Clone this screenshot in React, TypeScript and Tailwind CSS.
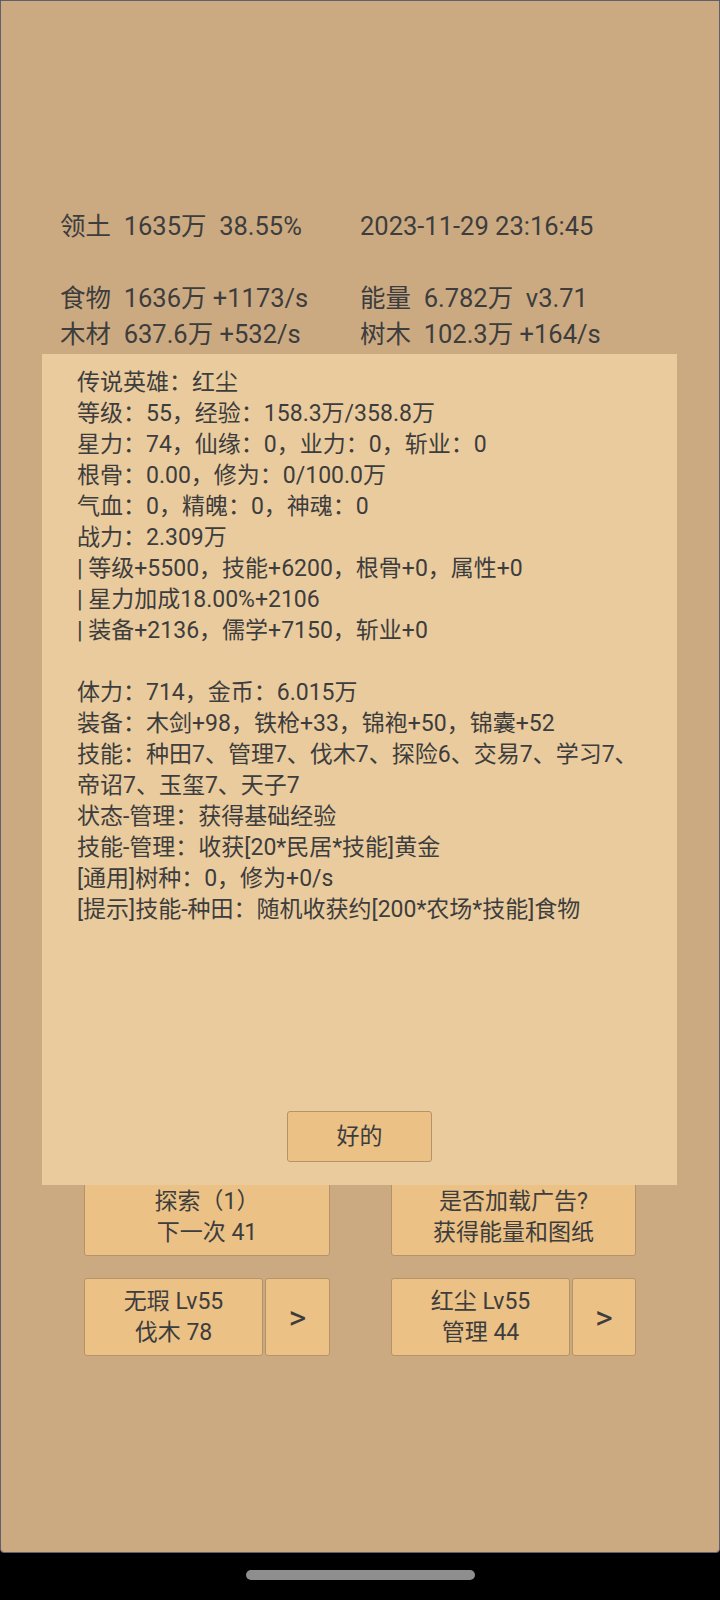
import React from "react"

const font = { fontFamily: "Roboto, 'Noto Sans CJK SC', sans-serif" }

const heroLines = [
  "传说英雄：红尘",
  "等级：55，经验：158.3万/358.8万",
  "星力：74，仙缘：0，业力：0，斩业：0",
  "根骨：0.00，修为：0/100.0万",
  "气血：0，精魄：0，神魂：0",
  "战力：2.309万",
  "| 等级+5500，技能+6200，根骨+0，属性+0",
  "| 星力加成18.00%+2106",
  "| 装备+2136，儒学+7150，斩业+0",
  "",
  "体力：714，金币：6.015万",
  "装备：木剑+98，铁枪+33，锦袍+50，锦囊+52",
  "技能：种田7、管理7、伐木7、探险6、交易7、学习7、",
  "帝诏7、玉玺7、天子7",
  "状态-管理：获得基础经验",
  "技能-管理：收获[20*民居*技能]黄金",
  "[通用]树种：0，修为+0/s",
  "[提示]技能-种田：随机收获约[200*农场*技能]食物",
]

function Btn({ children, className }: { children: React.ReactNode; className: string }) {
  return (
    <button
      className={
        "flex flex-col items-center justify-center rounded-[3px] border border-[#b4936b] bg-[#ebc186] leading-[31px] text-[#3d3d3d] " +
        className
      }
    >
      {children}
    </button>
  )
}

export default function App() {
  return (
    <div className="relative h-[1600px] w-[720px] bg-black" style={font}>
      <div className="flex h-[1553px] flex-col rounded-b-[4px] border border-[#5f5f6f] bg-[#cbaa82] text-[#3d3d3d]">
        {/* stats */}
        <div className="mt-[207px] grid grid-cols-[300px_300px] pl-[59px] text-[25.5px] leading-[36px] whitespace-pre">
          <div>领土  1635万  38.55%</div>
          <div>2023-11-29 23:16:45</div>
          <div>&nbsp;</div>
          <div>&nbsp;</div>
          <div>食物  1636万 +1173/s</div>
          <div>能量  6.782万  v3.71</div>
          <div>木材  637.6万 +532/s</div>
          <div>树木  102.3万 +164/s</div>
        </div>

        {/* action buttons */}
        <div className="mt-auto mb-[196px] flex flex-col gap-[22px] px-[83px]">
          <div className="flex justify-between">
            <Btn className="h-[78px] w-[246px] text-[23px]">
              <span>探索（1）</span>
              <span>下一次 41</span>
            </Btn>
            <Btn className="h-[78px] w-[245px] text-[23px]">
              <span>是否加载广告?</span>
              <span>获得能量和图纸</span>
            </Btn>
          </div>
          <div className="flex justify-between">
            <div className="flex gap-[2px]">
              <Btn className="h-[78px] w-[179px] text-[23px]">
                <span>无瑕 Lv55</span>
                <span>伐木 78</span>
              </Btn>
              <Btn className="h-[78px] w-[65px] text-[34px]">&gt;</Btn>
            </div>
            <div className="flex gap-[2px]">
              <Btn className="h-[78px] w-[179px] text-[23px]">
                <span>红尘 Lv55</span>
                <span>管理 44</span>
              </Btn>
              <Btn className="h-[78px] w-[64px] text-[34px]">&gt;</Btn>
            </div>
          </div>
        </div>
      </div>

      {/* nav bar pill */}
      <div className="mx-auto mt-[17px] h-[10px] w-[229px] rounded-full bg-[#8e8e8e]" />

      {/* hero dialog */}
      <div className="absolute left-[42px] top-[354px] flex h-[831px] w-[635px] flex-col bg-[#eacb9d] pl-[35px] pt-[13px] text-[23px] leading-[31px] text-[#3d3d3d]">
        {heroLines.map((l, i) => (
          <div key={i} className="h-[31px] whitespace-pre">
            {l}
          </div>
        ))}
        <div className="mt-auto mb-[23px] -ml-[35px] flex justify-center">
          <Btn className="h-[51px] w-[145px] text-[23px]">好的</Btn>
        </div>
      </div>
    </div>
  )
}
